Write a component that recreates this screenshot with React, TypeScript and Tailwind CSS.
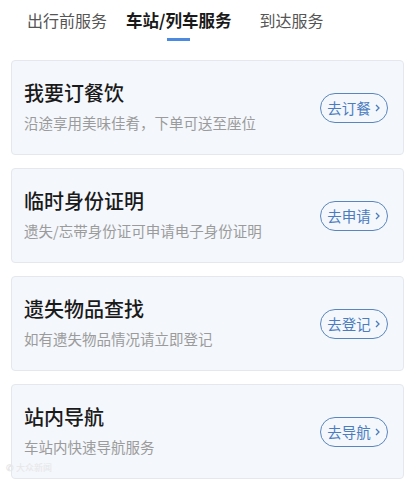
const tabs = ["出行前服务", "车站/列车服务", "到达服务"];

const services = [
  { title: "我要订餐饮", desc: "沿途享用美味佳肴，下单可送至座位", action: "去订餐" },
  { title: "临时身份证明", desc: "遗失/忘带身份证可申请电子身份证明", action: "去申请" },
  { title: "遗失物品查找", desc: "如有遗失物品情况请立即登记", action: "去登记" },
  { title: "站内导航", desc: "车站内快速导航服务", action: "去导航" },
];

const font = { fontFamily: '"Noto Sans CJK SC", "Noto Sans", sans-serif' };

export default function App() {
  return (
    <div className="relative w-[415px] h-[479px] overflow-hidden bg-white" style={font}>
      {/* tab bar */}
      <div className="flex items-start h-[60px] pt-[9px] pl-[27px]">
        <div className="text-[16px] leading-[22px] text-[#555]">{tabs[0]}</div>
        <div className="ml-[19px] flex flex-col items-center">
          <div className="text-[16.5px] leading-[22px] font-bold text-[#1a1a1a]">{tabs[1]}</div>
          <div className="mt-[7px] w-[23px] h-[3px] bg-[#4b8ade]" />
        </div>
        <div className="ml-[28px] text-[16px] leading-[22px] text-[#555]">{tabs[2]}</div>
      </div>

      {/* service cards */}
      <div className="flex flex-col gap-[13px] px-[11px]">
        {services.map((s) => (
          <ServiceCard key={s.title} service={s} />
        ))}
      </div>

      {/* watermark */}
      <div className="absolute left-[6px] bottom-[6px] flex items-center gap-[2px] text-[9px] leading-[10px] text-[#e6e6e6]">
        <span className="font-bold">✆</span>
        <span>大众新闻</span>
      </div>
    </div>
  );
}

function ServiceCard({ service }: { service: (typeof services)[0] }) {
  return (
    <div className="flex items-center h-[95px] pl-[12px] pr-[15px] bg-[#f4f7fc] border border-[#e4e8ee] rounded-[4px]">
      <div className="flex-1 flex flex-col pb-[4px]">
        <p className="text-[20px] leading-[28px] font-medium text-[#1a1a1a]">{service.title}</p>
        <p className="mt-[6px] text-[14.5px] leading-[20px] text-[#9b9b9b]">{service.desc}</p>
      </div>
      <div className="flex items-center justify-center w-[68px] h-[30px] rounded-full border border-[#5a86c0] text-[14.5px] text-[#4a7cbf]">
        <span>{service.action}</span>
        <svg width="7" height="10" viewBox="0 0 7 10" className="ml-[3px] mt-[1px]">
          <path d="M2 2 L5 5 L2 8" fill="none" stroke="#4a7cbf" strokeWidth="1.3" />
        </svg>
      </div>
    </div>
  );
}
